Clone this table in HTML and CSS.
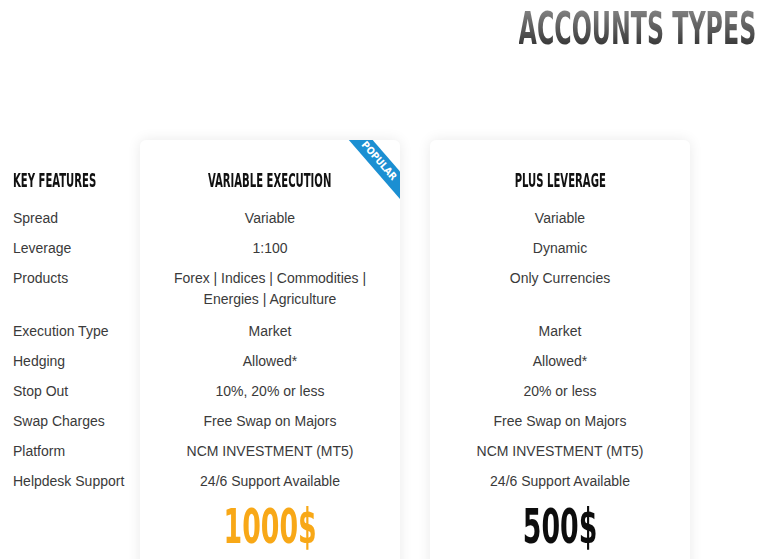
FILE: index.html
```html
<!DOCTYPE html>
<html lang="en">
<head>
<meta charset="utf-8">
<title>Accounts Types</title>
<link rel="stylesheet" href="styles.css">
</head>
<body>
<header class="page-head">
  <h1 class="title"><span class="title-text">ACCOUNTS TYPES</span></h1>
</header>
<main class="plans">
  <section class="features">
    <h2 class="col-head col-head-left"><span class="cond cond-left">KEY FEATURES</span></h2>
    <ul class="rows">
      <li class="row">Spread</li>
      <li class="row">Leverage</li>
      <li class="row row-tall">Products</li>
      <li class="row">Execution Type</li>
      <li class="row">Hedging</li>
      <li class="row">Stop Out</li>
      <li class="row">Swap Charges</li>
      <li class="row">Platform</li>
      <li class="row">Helpdesk Support</li>
    </ul>
  </section>
  <section class="card">
    <div class="ribbon">POPULAR</div>
    <h2 class="col-head"><span class="cond">VARIABLE EXECUTION</span></h2>
    <ul class="rows rows-center">
      <li class="row">Variable</li>
      <li class="row">1:100</li>
      <li class="row row-tall">Forex | Indices | Commodities |<br>Energies | Agriculture</li>
      <li class="row">Market</li>
      <li class="row">Allowed*</li>
      <li class="row">10%, 20% or less</li>
      <li class="row">Free Swap on Majors</li>
      <li class="row">NCM INVESTMENT (MT5)</li>
      <li class="row">24/6 Support Available</li>
    </ul>
    <div class="price price-orange"><span class="price-text">1000$</span></div>
  </section>
  <section class="card">
    <h2 class="col-head"><span class="cond">PLUS LEVERAGE</span></h2>
    <ul class="rows rows-center">
      <li class="row">Variable</li>
      <li class="row">Dynamic</li>
      <li class="row row-tall">Only Currencies</li>
      <li class="row">Market</li>
      <li class="row">Allowed*</li>
      <li class="row">20% or less</li>
      <li class="row">Free Swap on Majors</li>
      <li class="row">NCM INVESTMENT (MT5)</li>
      <li class="row">24/6 Support Available</li>
    </ul>
    <div class="price price-dark"><span class="price-text">500$</span></div>
  </section>
</main>
</body>
</html>
```

FILE: styles.css
```css
* { box-sizing: border-box; }

html, body {
  margin: 0;
  padding: 0;
  background: #ffffff;
}

body {
  font-family: "Liberation Sans", Arial, sans-serif;
  color: #3a3a3a;
  overflow: hidden;
  height: 559px;
}

.page-head {
  display: flex;
  justify-content: flex-end;
  padding: 6px 12px 0 0;
}

.title {
  margin: 0;
  font-family: "DejaVu Sans Condensed", sans-serif;
  font-weight: bold;
  font-size: 45px;
  line-height: 46px;
}

.title-text {
  display: inline-block;
  transform: scaleX(0.585);
  transform-origin: right center;
  background: linear-gradient(to bottom, #8a8a8a 0%, #555555 55%, #2a2a2a 100%);
  -webkit-background-clip: text;
  background-clip: text;
  color: transparent;
}

.plans {
  display: flex;
  margin-top: 88px;
  align-items: flex-start;
}

.features {
  flex: 0 0 140px;
  width: 140px;
  padding: 28px 0 0 13px;
}

.card {
  position: relative;
  overflow: hidden;
  flex: 0 0 260px;
  width: 260px;
  padding: 28px 0 60px;
  background: #ffffff;
  border-radius: 6px;
  box-shadow: 0 0 14px rgba(0, 0, 0, 0.09);
  text-align: center;
}

.card + .card {
  margin-left: 30px;
}

.col-head {
  margin: 0 0 11px;
  font-family: "DejaVu Sans Condensed", sans-serif;
  font-weight: bold;
  font-size: 19px;
  line-height: 24px;
  color: #111111;
  white-space: nowrap;
}

.cond {
  display: inline-block;
  transform: scaleX(0.59);
  transform-origin: center center;
}

.cond-left {
  transform-origin: left center;
}

.rows {
  list-style: none;
  margin: 0;
  padding: 0;
}

.row {
  font-size: 14px;
  line-height: 21px;
  padding: 4.5px 0;
  white-space: nowrap;
}

.row-tall {
  height: 53px;
}

.price {
  margin-top: 6px;
  font-family: "DejaVu Sans Condensed", sans-serif;
  font-weight: bold;
  font-size: 48px;
  line-height: 48px;
}

.price-text {
  display: inline-block;
  transform: scaleX(0.62);
  transform-origin: center center;
}

.price-orange { color: #f8a817; }
.price-dark { color: #0d0d0d; }

.ribbon {
  position: absolute;
  left: 189px;
  top: 12px;
  width: 100px;
  height: 18px;
  background: #1b8fd2;
  color: #ffffff;
  transform: rotate(49deg);
  font-family: "DejaVu Sans Condensed", sans-serif;
  font-weight: bold;
  font-size: 10px;
  line-height: 18px;
  text-align: center;
}
```
